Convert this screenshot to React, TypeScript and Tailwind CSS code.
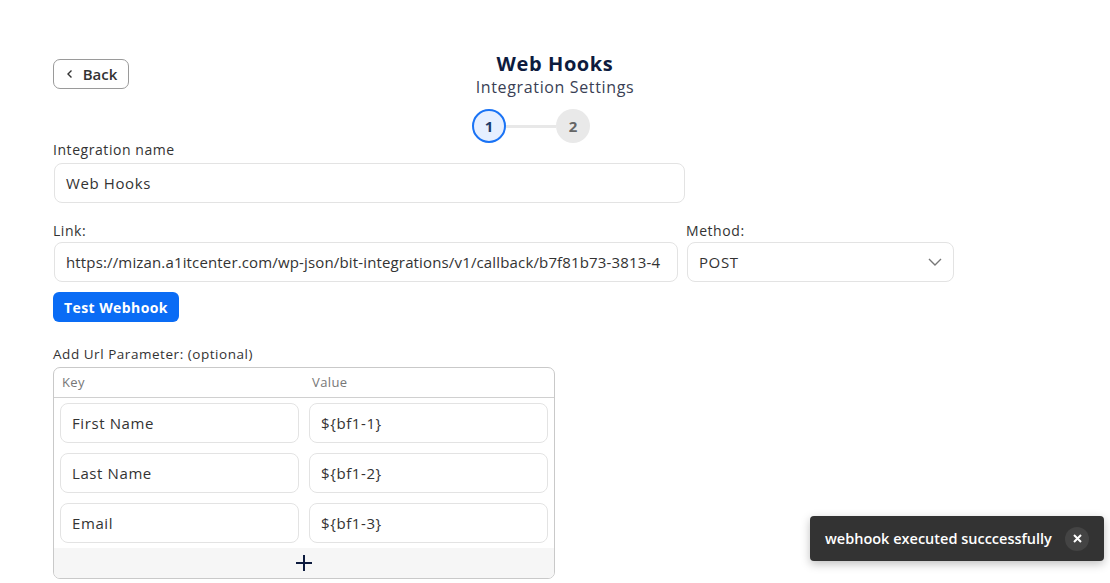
import React from "react";

const font = { fontFamily: '"Open Sans", "Noto Sans", sans-serif' };

function Field({ children, className = "" }: { children: React.ReactNode; className?: string }) {
  return (
    <div
      className={`h-[40px] flex items-center px-[11px] border border-[#e3e3e3] rounded-[8px] bg-white text-[15px] text-[#333] whitespace-nowrap overflow-hidden ${className}`}
    >
      {children}
    </div>
  );
}

export default function App() {
  const rows = [
    ["First Name", "${bf1-1}"],
    ["Last Name", "${bf1-2}"],
    ["Email", "${bf1-3}"],
  ];
  return (
    <div className="relative w-[1110px] h-[583px] bg-white overflow-hidden" style={font}>
      <div className="px-[53px] pt-[52px]">
        <div className="grid grid-cols-[1fr_auto_1fr] items-start">
          <div className="pt-[7px]">
            <button className="h-[30px] w-[76px] flex items-center justify-center gap-[8px] border border-[#9a9a9a] rounded-[7px] text-[15px] font-semibold text-[#333] bg-white">
              <svg width="10" height="10" viewBox="0 0 10 10" fill="none" stroke="#333" strokeWidth="1.4">
                <path d="M6.5 1.5 L3 5 L6.5 8.5" />
              </svg>
              Back
            </button>
          </div>
          <div className="flex flex-col items-center">
            <div className="text-[20px] font-bold tracking-[0.03em] text-[#0d1b3e] leading-[24px]">Web Hooks</div>
            <div className="text-[16px] tracking-[0.04em] text-[#3a3f55] leading-[22px]">Integration Settings</div>
            <div className="flex items-center mt-[11px] mr-[48px]">
              <div className="w-[34px] h-[34px] rounded-full border-2 border-[#1a73f5] bg-[#e6efff] flex items-center justify-center text-[15px] font-bold text-[#1b3a6b]">
                1
              </div>
              <div className="w-[50px] h-[3px] bg-[#e8e8e8]" />
              <div className="w-[34px] h-[34px] rounded-full bg-[#e9e9e9] flex items-center justify-center text-[15px] font-bold text-[#666]">
                2
              </div>
            </div>
          </div>
          <div />
        </div>

        <div className="mt-[-3px] text-[14px] tracking-[0.04em] text-[#333] leading-[20px]">Integration name</div>
        <Field className="mt-[3px] w-[631px] ml-[1px] tracking-[0.04em]">Web Hooks</Field>

        <div className="flex mt-[18px] ml-[1px]">
          <div className="w-[624px]">
            <div className="text-[14px] tracking-[0.04em] text-[#333] leading-[20px] -ml-[1px]">Link:</div>
            <Field className="mt-[1px] tracking-[0.01em]">
              https://mizan.a1itcenter.com/wp-json/bit-integrations/v1/callback/b7f81b73-3813-4
            </Field>
          </div>
          <div className="w-[267px] ml-[9px]">
            <div className="text-[14px] tracking-[0.04em] text-[#333] leading-[20px] -ml-[1px]">Method:</div>
            <Field className="mt-[1px] justify-between tracking-[0.04em]">
              <span>POST</span>
              <svg width="14" height="8" viewBox="0 0 14 8" fill="none" stroke="#777" strokeWidth="1.4">
                <path d="M1 1 L7 7 L13 1" />
              </svg>
            </Field>
          </div>
        </div>

        <button className="mt-[10px] h-[30px] w-[126px] rounded-[6px] bg-[#0a6cf5] text-white text-[14px] tracking-[0.03em] font-bold">
          Test Webhook
        </button>

        <div className="mt-[22px] text-[13.5px] tracking-[0.04em] text-[#333] leading-[20px]">Add Url Parameter: (optional)</div>
        <div className="mt-[3px] w-[502px] border border-[#c9c9c9] rounded-[7px] overflow-hidden">
          <div className="h-[30px] grid grid-cols-2 items-center border-b border-[#d0d0d0] text-[13px] tracking-[0.03em] text-[#777]">
            <div className="pl-[8px]">Key</div>
            <div className="pl-[8px]">Value</div>
          </div>
          <div className="flex flex-col gap-[10px] px-[6px] pt-[5px] pb-[5px]">
            {rows.map(([k, v]) => (
              <div key={k} className="grid grid-cols-2 gap-[10px]">
                <Field className="tracking-[0.04em]">{k}</Field>
                <Field className="tracking-[0.04em]">{v}</Field>
              </div>
            ))}
          </div>
          <div className="h-[30px] bg-[#f6f6f6] flex items-center justify-center">
            <svg width="18" height="18" viewBox="0 0 18 18" stroke="#0d1b3e" strokeWidth="2">
              <path d="M9 1 V17 M1 9 H17" />
            </svg>
          </div>
        </div>
      </div>

      <div className="absolute left-[810px] top-[516px] w-[294px] h-[45px] bg-[#333] rounded-[4px] shadow-[0_3px_10px_rgba(0,0,0,0.25)] flex items-center pl-[15px] pr-[15px] justify-between">
        <span className="text-white text-[14.5px] font-semibold whitespace-nowrap">webhook executed succcessfully</span>
        <span className="w-[24px] h-[24px] rounded-full bg-[#444] flex items-center justify-center shrink-0">
          <svg width="9" height="9" viewBox="0 0 9 9" stroke="white" strokeWidth="2">
            <path d="M1 1 L8 8 M8 1 L1 8" />
          </svg>
        </span>
      </div>
    </div>
  );
}
